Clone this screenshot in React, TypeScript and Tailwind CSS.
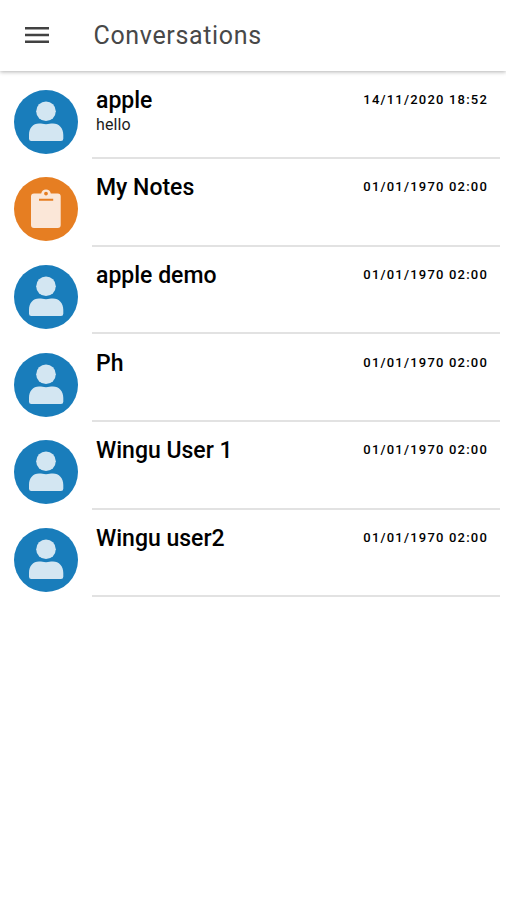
type Chat = {
  name: string;
  date: string;
  message?: string;
  notes?: boolean;
};

const chats: Chat[] = [
  { name: "apple", date: "14/11/2020 18:52", message: "hello" },
  { name: "My Notes", date: "01/01/1970 02:00", notes: true },
  { name: "apple demo", date: "01/01/1970 02:00" },
  { name: "Ph", date: "01/01/1970 02:00" },
  { name: "Wingu User 1", date: "01/01/1970 02:00" },
  { name: "Wingu user2", date: "01/01/1970 02:00" },
];

const PersonAvatar = () => (
  <svg viewBox="0 0 64 64" className="h-16 w-16 shrink-0">
    <circle cx="32" cy="32" r="32" fill="#197dbb" />
    <circle cx="32" cy="21.3" r="9.8" fill="#d3e6f2" />
    <path
      d="M15 45C15 38 19 33.500 25 33.500C28 33.500 29 34.200 32 34.200C35 34.200 36 33.500 39 33.500C45 33.500 49.300 38 49.300 45V48.800Q49.300 51 47 51H17.300Q15 51 15 48.800Z"
      fill="#d3e6f2"
    />
  </svg>
);

const NotesAvatar = () => (
  <svg viewBox="0 0 64 64" className="h-16 w-16 shrink-0">
    <circle cx="32" cy="32" r="32" fill="#e67e22" />
    <path
      fillRule="evenodd"
      d="M20 16.500H27.200A4.900 4.900 0 0 1 36.800 16.500H43.700Q46.700 16.500 46.700 19.500V48Q46.700 51 43.700 51H20Q17 51 17 48V19.500Q17 16.500 20 16.500ZM32 14.700A1.900 1.900 0 1 0 32 18.500A1.900 1.900 0 1 0 32 14.700ZM25 21.700V23.700H39.200V21.700Z"
      fill="#fbe7d8"
    />
  </svg>
);

const App = () => {
  return (
    <div className="h-[900px] w-[506px] overflow-hidden bg-white font-[Roboto,sans-serif] text-black">
      <header className="flex h-[71px] items-center bg-white pl-[25px] shadow-[0_1px_4px_rgba(0,0,0,0.3)]">
        <svg viewBox="0 0 24 18" className="h-[18px] w-6" fill="#424242">
          <path d="M0 0h24v2.500H0zM0 6.800h24v2.500H0zM0 13.600h24v2.500H0z" />
        </svg>
        <h1 className="ml-[44.5px] text-[25px] tracking-[0.65px] text-[#484848]">
          Conversations
        </h1>
      </header>

      <ul className="pt-[15.6px]">
        {chats.map((chat) => (
          <li key={chat.name} className="flex h-[87.7px] pl-[13.5px] pr-[6px]">
            <div className="pt-[3px]">
              {chat.notes ? <NotesAvatar /> : <PersonAvatar />}
            </div>
            <div className="ml-[14.5px] h-[72.4px] flex-1 border-b-2 border-[#e2e2e2] pl-1 pr-3">
              <div className="flex justify-between">
                <h2 className="text-[23px] leading-[27px] font-medium">
                  {chat.name}
                </h2>
                <span className="text-[13px] leading-[25px] tracking-[1.2px] font-medium">
                  {chat.date}
                </span>
              </div>
              <p className="text-base leading-[22px] tracking-[0.1px] text-[#1c1c1c]">
                {chat.message}
              </p>
            </div>
          </li>
        ))}
      </ul>
    </div>
  );
};

export default App;
